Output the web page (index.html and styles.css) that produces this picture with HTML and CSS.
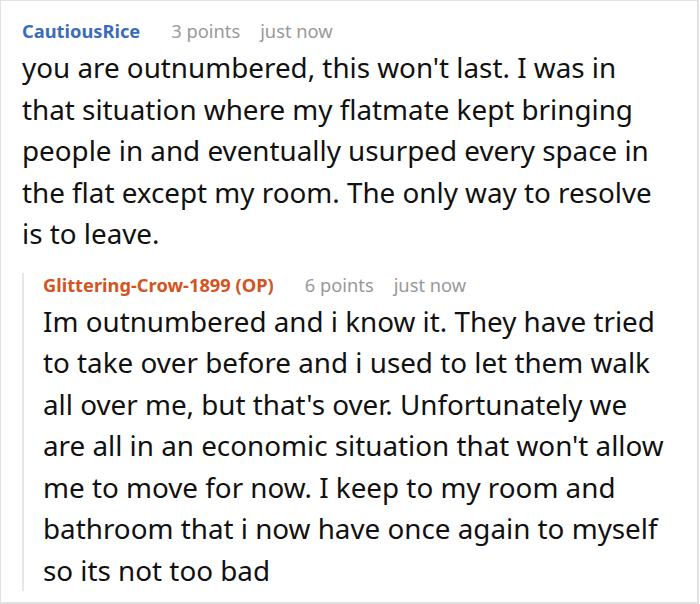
FILE: index.html
```html
<!DOCTYPE html>
<html>
<head>
<meta charset="utf-8">
<link rel="stylesheet" href="styles.css">
</head>
<body>
<div class="frame">
  <div class="comment">
    <div class="meta">
      <span class="author">CautiousRice</span>
      <span class="info">3 points</span>
      <span class="info">just now</span>
    </div>
    <p class="text">you are outnumbered, this won't last. I was in that situation where my flatmate kept bringing people in and eventually usurped every space in the flat except my room. The only way to resolve is to leave.</p>
    <div class="reply">
      <div class="meta">
        <span class="author op">Glittering-Crow-1899 (OP)</span>
        <span class="info">6 points</span>
        <span class="info">just now</span>
      </div>
      <p class="text">Im outnumbered and i know it. They have tried to take over before and i used to let them walk all over me, but that's over. Unfortunately we are all in an economic situation that won't allow me to move for now. I keep to my room and bathroom that i now have once again to myself so its not too bad</p>
    </div>
  </div>
</div>
</body>
</html>
```
FILE: styles.css
```css
html, body {
  margin: 0;
  padding: 0;
  background: #ffffff;
}
.frame {
  box-sizing: border-box;
  width: 699px;
  height: 604px;
  border: 1px solid #e2e2e2;
  border-width: 1px 2px 2px 1px;
  overflow: hidden;
  font-family: "Noto Sans", "Open Sans", sans-serif;
}
.comment {
  padding: 18px 36px 0 21px;
}
.meta {
  display: flex;
  align-items: baseline;
  font-size: 18.3px;
  line-height: 24px;
}
.author {
  font-weight: bold;
  color: #3a6cbc;
  margin-right: 31px;
}
.author.op {
  color: #d4531e;
}
.info {
  color: #999999;
  margin-right: 20px;
}
.text {
  margin: 4px 0 0;
  font-size: 27.8px;
  line-height: 41.5px;
  color: #111111;
}
.reply {
  margin-top: 27px;
  margin-right: -8px;
  border-left: 2px solid #e6e6e6;
  padding-left: 19px;
}
.reply .meta {
  margin-top: -9px;
}
.reply .text {
  margin-bottom: -8px;
}
```
